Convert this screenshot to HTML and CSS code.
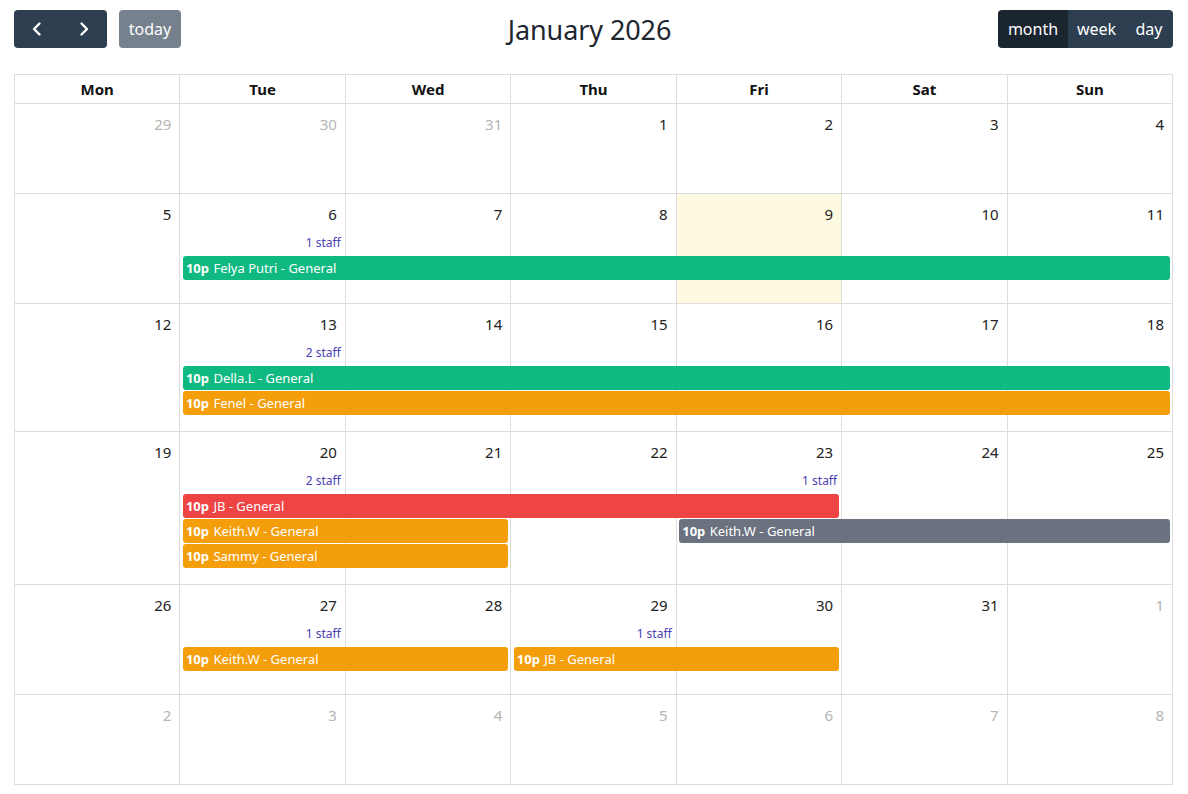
FILE: index.html
```html
<!DOCTYPE html>
<html>
<head>
<meta charset="utf-8">
<link rel="stylesheet" href="styles.css">
</head>
<body>
<div class="toolbar">
  <div class="chunk left">
    <div class="btn-group">
      <button class="btn icon" aria-label="prev"><svg width="16" height="16" viewBox="0 0 16 16"><path d="M10.5 2.5 L5 8 L10.5 13.5" fill="none" stroke="#fff" stroke-width="2.4" stroke-linecap="round" stroke-linejoin="round"/></svg></button>
      <button class="btn icon" aria-label="next"><svg width="16" height="16" viewBox="0 0 16 16"><path d="M5.5 2.5 L11 8 L5.5 13.5" fill="none" stroke="#fff" stroke-width="2.4" stroke-linecap="round" stroke-linejoin="round"/></svg></button>
    </div>
    <button class="btn today">today</button>
  </div>
  <h2 class="title">January 2026</h2>
  <div class="chunk right">
    <div class="btn-group">
      <button class="btn active">month</button>
      <button class="btn">week</button>
      <button class="btn">day</button>
    </div>
  </div>
</div>

<div class="calendar">
  <div class="head">
    <div class="hcell">Mon</div><div class="hcell">Tue</div><div class="hcell">Wed</div><div class="hcell">Thu</div><div class="hcell">Fri</div><div class="hcell">Sat</div><div class="hcell">Sun</div>
  </div>

  <div class="week w0">
    <div class="day other"><span class="num">29</span></div>
    <div class="day other"><span class="num">30</span></div>
    <div class="day other"><span class="num">31</span></div>
    <div class="day"><span class="num">1</span></div>
    <div class="day"><span class="num">2</span></div>
    <div class="day"><span class="num">3</span></div>
    <div class="day"><span class="num">4</span></div>
  </div>

  <div class="week w1">
    <div class="day"><span class="num">5</span></div>
    <div class="day"><span class="num">6</span><span class="staff">1 staff</span></div>
    <div class="day"><span class="num">7</span></div>
    <div class="day"><span class="num">8</span></div>
    <div class="day today-cell"><span class="num">9</span></div>
    <div class="day"><span class="num">10</span></div>
    <div class="day"><span class="num">11</span></div>
    <div class="event green c2-7 r1"><b>10p</b> Felya Putri - General</div>
  </div>

  <div class="week w2">
    <div class="day"><span class="num">12</span></div>
    <div class="day"><span class="num">13</span><span class="staff">2 staff</span></div>
    <div class="day"><span class="num">14</span></div>
    <div class="day"><span class="num">15</span></div>
    <div class="day"><span class="num">16</span></div>
    <div class="day"><span class="num">17</span></div>
    <div class="day"><span class="num">18</span></div>
    <div class="event green c2-7 r1"><b>10p</b> Della.L - General</div>
    <div class="event amber c2-7 r2"><b>10p</b> Fenel - General</div>
  </div>

  <div class="week w3">
    <div class="day"><span class="num">19</span></div>
    <div class="day"><span class="num">20</span><span class="staff">2 staff</span></div>
    <div class="day"><span class="num">21</span></div>
    <div class="day"><span class="num">22</span></div>
    <div class="day"><span class="num">23</span><span class="staff">1 staff</span></div>
    <div class="day"><span class="num">24</span></div>
    <div class="day"><span class="num">25</span></div>
    <div class="event red c2-5 r1"><b>10p</b> JB - General</div>
    <div class="event amber c2-3 r2"><b>10p</b> Keith.W - General</div>
    <div class="event gray c5-7 r2"><b>10p</b> Keith.W - General</div>
    <div class="event amber c2-3 r3"><b>10p</b> Sammy - General</div>
  </div>

  <div class="week w1">
    <div class="day"><span class="num">26</span></div>
    <div class="day"><span class="num">27</span><span class="staff">1 staff</span></div>
    <div class="day"><span class="num">28</span></div>
    <div class="day"><span class="num">29</span><span class="staff">1 staff</span></div>
    <div class="day"><span class="num">30</span></div>
    <div class="day"><span class="num">31</span></div>
    <div class="day other"><span class="num">1</span></div>
    <div class="event amber c2-3 r1"><b>10p</b> Keith.W - General</div>
    <div class="event amber c4-5 r1"><b>10p</b> JB - General</div>
  </div>

  <div class="week w0">
    <div class="day other"><span class="num">2</span></div>
    <div class="day other"><span class="num">3</span></div>
    <div class="day other"><span class="num">4</span></div>
    <div class="day other"><span class="num">5</span></div>
    <div class="day other"><span class="num">6</span></div>
    <div class="day other"><span class="num">7</span></div>
    <div class="day other"><span class="num">8</span></div>
  </div>
</div>
</body>
</html>
```

FILE: styles.css
```css
* { box-sizing: border-box; }
body {
  margin: 10px 15px 0 14px;
  font-family: "Noto Sans", "Open Sans", sans-serif;
  color: #212529;
  background: #fff;
}
.toolbar {
  display: flex;
  justify-content: space-between;
  align-items: center;
  height: 38px;
  margin-bottom: 26px;
}
.chunk { display: flex; align-items: center; gap: 12px; }
.title {
  margin: 0;
  font-size: 27px;
  font-weight: 400;
  color: #1e2630;
  letter-spacing: -0.1px;
}
.btn-group { display: flex; border-radius: 4px; overflow: hidden; }
.btn {
  border: 0;
  margin: 0;
  height: 38px;
  background: #2c3e50;
  color: #fff;
  font-family: inherit;
  font-size: 16px;
  padding: 0 10px;
  line-height: 38px;
  cursor: pointer;
}
.btn.icon {
  width: 46.5px;
  padding: 0;
  display: flex;
  align-items: center;
  justify-content: center;
}
.btn.today { border-radius: 4px; width: 62px; padding: 0; opacity: 0.65; }
.btn.active { background: #1a252f; }
.right .btn:nth-child(1) { width: 70px; padding: 0; }
.right .btn:nth-child(2) { width: 57px; padding: 0; }
.right .btn:nth-child(3) { width: 48px; padding: 0; }

.calendar {
  border-top: 1px solid #dddddd;
  border-left: 1px solid #dddddd;
}
.head, .week {
  display: grid;
  grid-template-columns: repeat(7, 1fr);
}
.hcell {
  height: 29px;
  border-right: 1px solid #dddddd;
  border-bottom: 1px solid #dddddd;
  text-align: center;
  font-weight: 700;
  font-size: 15px;
  line-height: 28px;
  color: #111;
}
.week.w0 { height: 90px; grid-template-rows: 1fr; }
.week.w1 { min-height: 110px; grid-template-rows: 62px 25px minmax(16px, 1fr); }
.week.w2 { grid-template-rows: 62px 25px 25px minmax(16px, 1fr); }
.week.w3 { grid-template-rows: 62px 25px 25px 25px minmax(16px, 1fr); }
.day {
  grid-row: 1 / -1;
  border-right: 1px solid #dddddd;
  border-bottom: 1px solid #dddddd;
  display: flex;
  flex-direction: column;
  align-items: flex-end;
  padding: 10px 0 0 0;
}
.day:nth-child(1) { grid-column: 1; }
.day:nth-child(2) { grid-column: 2; }
.day:nth-child(3) { grid-column: 3; }
.day:nth-child(4) { grid-column: 4; }
.day:nth-child(5) { grid-column: 5; }
.day:nth-child(6) { grid-column: 6; }
.day:nth-child(7) { grid-column: 7; }
.num {
  font-size: 15px;
  line-height: 20px;
  padding-right: 8px;
  color: #222;
}
.other .num { color: #b5b5b5; }
.staff {
  margin-top: 11px;
  font-size: 12px;
  line-height: 16px;
  padding-right: 4px;
  color: #4a3fb5;
}
.today-cell { background: #fef9e1; }
.event {
  height: 24px;
  margin: 0 3px 0 2.5px;
  border-radius: 3px;
  color: #fff;
  font-size: 13px;
  line-height: 25px;
  padding-left: 3px;
  white-space: nowrap;
  overflow: hidden;
}
.event b { font-weight: 700; margin-right: 1px; }
.r1 { grid-row: 2; }
.r2 { grid-row: 3; }
.r3 { grid-row: 4; }
.c2-7 { grid-column: 2 / 8; }
.c2-5 { grid-column: 2 / 6; }
.c2-3 { grid-column: 2 / 4; }
.c4-5 { grid-column: 4 / 6; }
.c5-7 { grid-column: 5 / 8; }
.green { background: #10b981; }
.amber { background: #f59e0b; }
.red { background: #ef4444; }
.gray { background: #6b7280; }
```
